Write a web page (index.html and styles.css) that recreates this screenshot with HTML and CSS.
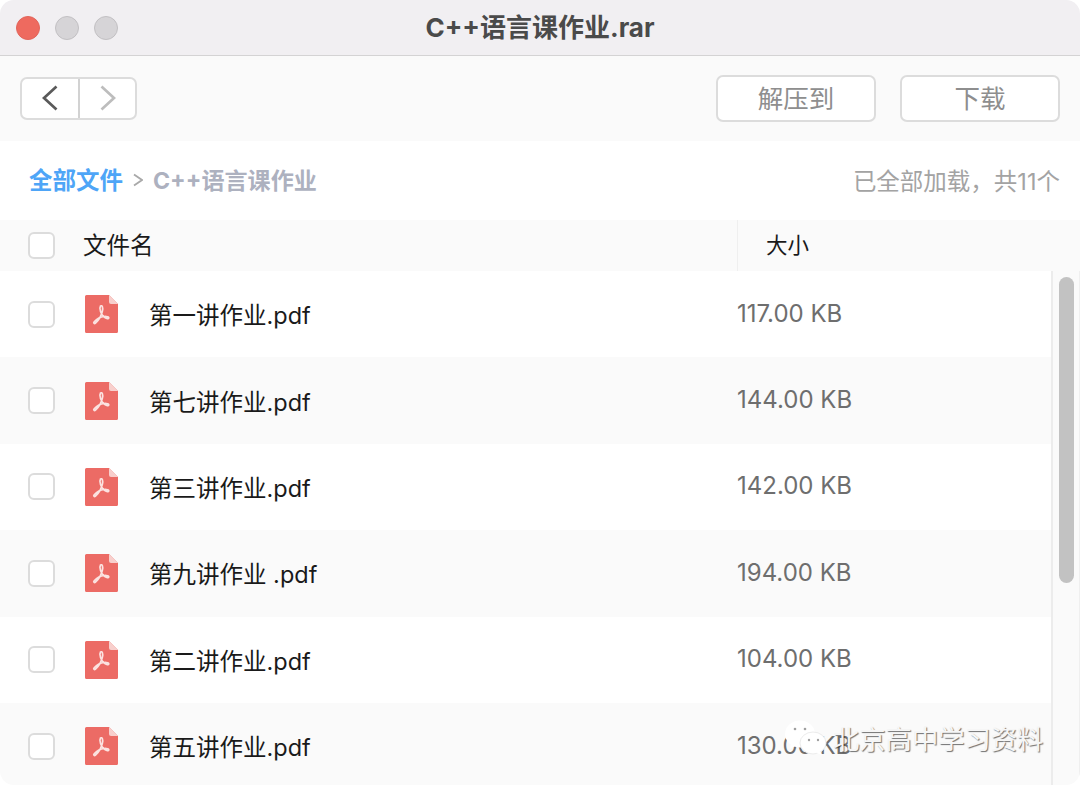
FILE: index.html
```html
<!DOCTYPE html>
<html lang="zh">
<head>
<meta charset="utf-8">
<title>C++语言课作业.rar</title>
<link rel="stylesheet" href="styles.css">
</head>
<body>
<div class="window">
  <header class="titlebar">
    <div class="lights"><span class="light red"></span><span class="light"></span><span class="light"></span></div>
    <div class="title">C++语言课作业.rar</div>
  </header>
  <div class="toolbar">
    <div class="nav">
      <div class="nav-btn first"><svg width="18" height="26" viewBox="0 0 18 26"><path d="M15.500 1.500 3 13l12.500 11.500" fill="none" stroke="#5a5a5a" stroke-width="2.700"/></svg></div>
      <div class="nav-btn"><svg width="18" height="26" viewBox="0 0 18 26"><path d="M2.500 1.500 15 13 2.500 24.500" fill="none" stroke="#bdbdbd" stroke-width="2.700"/></svg></div>
    </div>
    <div class="actions"><div class="btn">解压到</div><div class="btn">下载</div></div>
  </div>
  <div class="crumbs">
    <div class="path"><span class="root">全部文件</span><svg class="sep" width="10" height="14" viewBox="0 0 10 14"><path d="M1 1.500 9 7l-8 5.500" fill="none" stroke="#a9a9a9" stroke-width="1.800"/></svg><span class="leaf">C++语言课作业</span></div>
    <div class="count">已全部加载，共11个</div>
  </div>
  <div class="thead">
    <span class="check"></span>
    <span class="th-name">文件名</span>
    <span class="th-size">大小</span>
  </div>
  <div class="body">
    <div class="rows">
      <div class="row"><span class="check"></span><svg class="pdf" viewBox="0 0 33 38"><use href="#pdf"/></svg><span class="name">第一讲作业.pdf</span><span class="size">117.00 KB</span></div>
      <div class="row alt"><span class="check"></span><svg class="pdf" viewBox="0 0 33 38"><use href="#pdf"/></svg><span class="name">第七讲作业.pdf</span><span class="size">144.00 KB</span></div>
      <div class="row"><span class="check"></span><svg class="pdf" viewBox="0 0 33 38"><use href="#pdf"/></svg><span class="name">第三讲作业.pdf</span><span class="size">142.00 KB</span></div>
      <div class="row alt"><span class="check"></span><svg class="pdf" viewBox="0 0 33 38"><use href="#pdf"/></svg><span class="name">第九讲作业 .pdf</span><span class="size">194.00 KB</span></div>
      <div class="row"><span class="check"></span><svg class="pdf" viewBox="0 0 33 38"><use href="#pdf"/></svg><span class="name">第二讲作业.pdf</span><span class="size">104.00 KB</span></div>
      <div class="row alt"><span class="check"></span><svg class="pdf" viewBox="0 0 33 38"><use href="#pdf"/></svg><span class="name">第五讲作业.pdf</span><span class="size">130.00 KB</span></div>
    </div>
    <div class="track"><div class="thumb"></div></div>
  </div>
  <div class="watermark">
    <svg width="44" height="36" viewBox="0 0 44 36"><ellipse cx="16" cy="14" rx="15" ry="13.500" fill="#fff"/><path d="M7 22 6 29l7-4z" fill="#fff"/><ellipse cx="29" cy="23" rx="13" ry="11" fill="#fff" stroke="#ececec" stroke-width="1"/><path d="M36 31l2 4-6-2z" fill="#fff"/><circle cx="11" cy="9" r="1.300" fill="#a0a0a0"/><circle cx="21" cy="9" r="1.300" fill="#a0a0a0"/><circle cx="25" cy="20" r="1.200" fill="#a0a0a0"/><circle cx="34" cy="20" r="1.200" fill="#a0a0a0"/></svg>
    <span class="wm-text">北京高中学习资料</span>
  </div>
</div>
<svg class="defs" width="0" height="0"><defs><symbol id="pdf" viewBox="0 0 33 38">
  <path d="M1.500 0H24l9 9v27.500a1.500 1.500 0 0 1-1.500 1.500h-30A1.500 1.500 0 0 1 0 36.500v-35A1.500 1.500 0 0 1 1.500 0z" fill="#ec6b65"/>
  <path d="M24 0l9 9h-7a2 2 0 0 1-2-2z" fill="#f8cfcc"/>
  <path d="M15.500 11c1.700-1 2.700 1.200 1.900 5-.9 4.200-3.800 9.300-6.900 12-1.200 1.100-2.400 0-1.300-1.300 2.700-3 7-5 10-5.200 2.500-.2 5 .6 4.500 1.700-.4 1-3 .2-5-1.600-2.500-2.300-4.900-8-3.200-10.600z" fill="none" stroke="#fbe3e1" stroke-width="1.700"/>
</symbol></defs></svg>
</body>
</html>
```
FILE: styles.css
```css
* { box-sizing: border-box; }
html, body { margin: 0; padding: 0; background: #fff; }
body { width: 1080px; height: 785px; overflow: hidden; font-family: Inter, "Noto Sans CJK SC", sans-serif; }
.defs { position: absolute; }
.window { position: relative; width: 1080px; height: 785px; overflow: hidden; background: #fff; border-radius: 14px; }
.titlebar { position: relative; height: 56px; background: #f1eff2; border-bottom: 1px solid #d4d3d4; display: flex; align-items: center; justify-content: center; }
.lights { position: absolute; left: 16px; top: 16px; display: flex; gap: 15px; }
.light { width: 24px; height: 24px; border-radius: 50%; background: #d6d4d7; border: 1px solid #c2c0c3; }
.light.red { background: #ee6a5f; border-color: #e2655b; }
.title { font-size: 26px; font-weight: 700; color: #4a4a4a; margin-top: -4px; }
.toolbar { height: 85px; background: #fafafa; display: flex; justify-content: space-between; align-items: center; padding: 0 20px; }
.nav { display: flex; width: 117px; height: 43px; background: #fff; border: 2px solid #dcdcdc; border-radius: 7px; margin-top: -1px; }
.nav-btn { flex: 1; display: flex; align-items: center; justify-content: center; }
.nav-btn.first { flex: 0 0 58px; border-right: 2px solid #d2d2d2; }
.actions { display: flex; gap: 24px; margin-top: -1px; }
.btn { width: 160px; height: 47px; background: #fff; border: 2px solid #dcdcdc; border-radius: 7px; display: flex; align-items: center; justify-content: center; font-size: 25.500px; color: #8e8e8e; padding-bottom: 3px; }
.crumbs { height: 79px; display: flex; align-items: center; justify-content: space-between; padding: 0 20px 0 29px; }
.path { display: flex; align-items: center; font-size: 23.500px; font-weight: 700; margin-top: -4px; }
.root { color: #4ea5f7; }
.sep { margin: 2px 10px 0; }
.leaf { color: #adb1bf; font-size: 23.100px; }
.count { font-size: 23.500px; color: #a3a3a3; margin-top: -1px; }
.thead { position: relative; height: 51px; background: #fafafa; display: flex; align-items: center; padding-left: 28px; }
.check { flex: none; width: 27px; height: 27px; background: #fff; border: 2px solid #dcdcdc; border-radius: 6px; }
.th-name { margin-left: 28px; font-size: 23.500px; color: #1a1a1a; margin-top: -4px; }
.th-size { position: absolute; left: 737px; top: 0; height: 51px; width: 343px; border-left: 1px solid #efefef; padding-left: 28px; line-height: 51px; font-size: 21.500px; color: #1a1a1a; }
.body { display: flex; height: 514px; }
.rows { width: 1051px; flex: none; }
.row { height: 86.400px; display: flex; align-items: center; padding-left: 28px; background: #fff; position: relative; }
.row.alt { background: #fafafa; }
.pdf { flex: none; width: 33px; height: 38px; margin-left: 30px; }
.name { margin-left: 31px; font-size: 23.500px; color: #1a1a1a; margin-top: 0; }
.size { position: absolute; left: 737px; font-size: 24px; color: #6e6e6e; margin-top: -2px; }
.track { flex: 1; border-left: 2px solid #ececec; border-right: 1px solid #efefef; background: #fafafa; padding: 6px 0 0 6px; }
.thumb { width: 15px; height: 306px; border-radius: 8px; background: #c2c2c2; }
.watermark { position: absolute; left: 784px; top: 718px; display: flex; align-items: center; }
.wm-text { font-size: 26.300px; margin-left: 5px; color: #f6f6f6; text-shadow: 1px 1px 1px rgba(0, 0, 0, .55); }
```
